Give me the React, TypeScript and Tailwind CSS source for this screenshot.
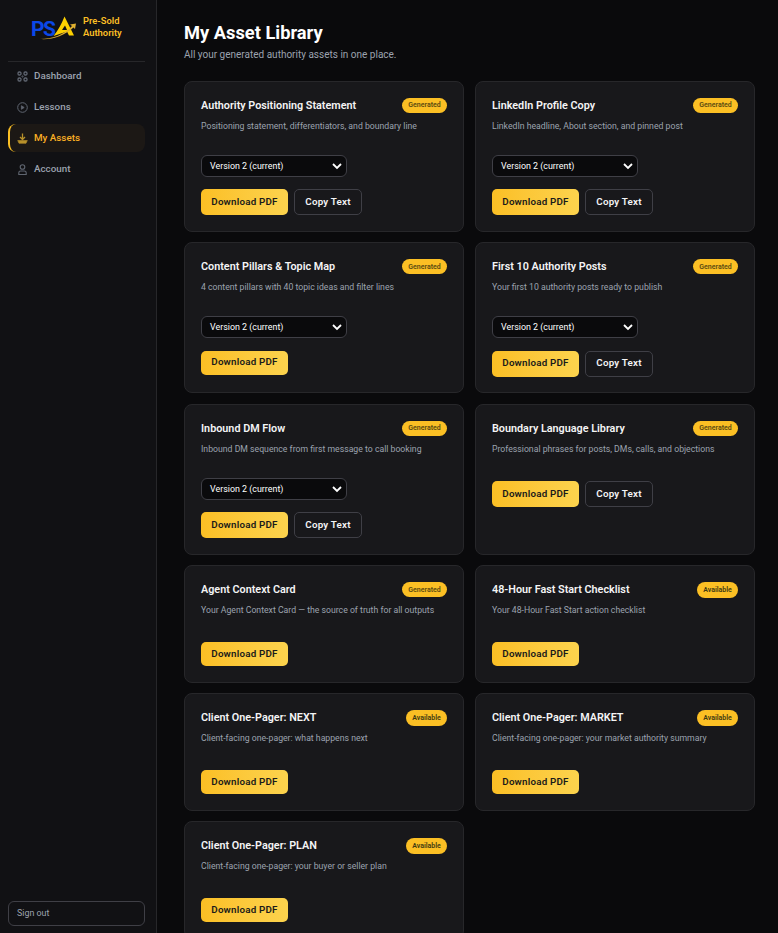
import React from "react";

type Asset = { title: string; desc: string; badge: string; select?: boolean; copy?: boolean; h: string };

const assets: Asset[] = [
  { title: "Authority Positioning Statement", desc: "Positioning statement, differentiators, and boundary line", badge: "Generated", select: true, copy: true, h: "h-[151px]" },
  { title: "LinkedIn Profile Copy", desc: "LinkedIn headline, About section, and pinned post", badge: "Generated", select: true, copy: true, h: "h-[151px]" },
  { title: "Content Pillars & Topic Map", desc: "4 content pillars with 40 topic ideas and filter lines", badge: "Generated", select: true, h: "h-[151px]" },
  { title: "First 10 Authority Posts", desc: "Your first 10 authority posts ready to publish", badge: "Generated", select: true, copy: true, h: "h-[151px]" },
  { title: "Inbound DM Flow", desc: "Inbound DM sequence from first message to call booking", badge: "Generated", select: true, copy: true, h: "h-[151px]" },
  { title: "Boundary Language Library", desc: "Professional phrases for posts, DMs, calls, and objections", badge: "Generated", copy: true, h: "h-[151px]" },
  { title: "Agent Context Card", desc: "Your Agent Context Card — the source of truth for all outputs", badge: "Generated", h: "h-[117.6px]" },
  { title: "48-Hour Fast Start Checklist", desc: "Your 48-Hour Fast Start action checklist", badge: "Available", h: "h-[117.6px]" },
  { title: "Client One-Pager: NEXT", desc: "Client-facing one-pager: what happens next", badge: "Available", h: "h-[117.6px]" },
  { title: "Client One-Pager: MARKET", desc: "Client-facing one-pager: your market authority summary", badge: "Available", h: "h-[117.6px]" },
  { title: "Client One-Pager: PLAN", desc: "Client-facing one-pager: your buyer or seller plan", badge: "Available", h: "h-[117.6px]" },
];

function DashIcon() {
  return (
    <svg width="11" height="11" viewBox="0 0 11 11" fill="none" stroke="currentColor" strokeWidth="1.3">
      <rect x="1" y="1" width="3" height="3" rx="1.2" />
      <rect x="7" y="1" width="3" height="3" rx="1.2" />
      <rect x="1" y="7" width="3" height="3" rx="1.2" />
      <rect x="7" y="7" width="3" height="3" rx="1.2" />
      <path d="M4 5.5H7M5.5 4V7" strokeWidth="0.5" />
    </svg>
  );
}

function PlayIcon() {
  return (
    <svg width="11" height="11" viewBox="0 0 11 11" fill="none" stroke="currentColor" strokeWidth="1">
      <circle cx="5.5" cy="5.5" r="4.8" />
      <path d="M4.4 3.7 7.2 5.5 4.4 7.3Z" fill="currentColor" strokeWidth="0.8" strokeLinejoin="round" />
    </svg>
  );
}

function TrayIcon() {
  return (
    <svg width="11" height="11" viewBox="0 0 11 11" fill="none" stroke="currentColor">
      <path d="M5.5 0.5V6M3 4 5.5 6.5 8 4" strokeWidth="1.3" />
      <path d="M0.7 7.5H10.3L9 10.3H2Z" fill="currentColor" strokeWidth="0.6" strokeLinejoin="round" />
    </svg>
  );
}

function UserIcon() {
  return (
    <svg width="11" height="11" viewBox="0 0 11 11" fill="none" stroke="currentColor" strokeWidth="1.1">
      <circle cx="5.5" cy="3" r="2.3" />
      <path d="M1.8 10.5V8.8C1.8 7.7 2.7 7 3.7 7H7.3C8.3 7 9.2 7.7 9.2 8.8V10.5Z" />
    </svg>
  );
}

function Logo() {
  return (
    <div className="relative h-[26px] w-[44px] shrink-0">
      <span className="absolute left-0 top-[2px] text-[21px] leading-[24px] font-bold tracking-[-1.5px] text-[#0b48e8]">PS</span>
      <svg className="absolute left-[7px] top-0" width="38" height="26" viewBox="0 0 38 26">
        <path d="M26.5 1.5 36 20.5H31L29 16.5 15.5 21 Q22 13 26.5 1.5Z" fill="#fdd000" />
        <path d="M27 10.5 29 15H24Z" fill="#101014" />
        <path d="M2 24C14 24 26 20 34 11L32 9.5 38 8.5 37 14 35.5 12.5C26 21 14 25 2 24Z" fill="#e0b030" />
      </svg>
    </div>
  );
}

function NavItem({ icon, label, active }: { icon: React.ReactNode; label: string; active?: boolean }) {
  return (
    <div
      className={
        active
          ? "flex h-[28px] items-center gap-[6px] rounded-[8px] border-l-2 border-[#fbbf24] bg-[#1c1815] pl-[7px] text-[#fbb024]"
          : "flex h-[28px] items-center gap-[6px] rounded-[8px] pl-[9px] text-[#9ca3af]"
      }
    >
      <span className={active ? "flex w-[11px] justify-center text-[#b8912a]" : "flex w-[11px] justify-center text-[#5f6570]"}>{icon}</span>
      <span className="pt-[1px] text-[9.8px] font-medium">{label}</span>
    </div>
  );
}

function Card({ a }: { a: Asset }) {
  const available = a.badge === "Available";
  return (
    <div className={`${a.h} flex flex-col rounded-[8px] border border-[#27272a] bg-[#18181b] px-[16px] pt-[16px]`}>
      <div className="flex items-center justify-between">
        <h3 className="text-[10.8px] leading-[16px] font-semibold text-[#f4f4f5]">{a.title}</h3>
        <span
          className={
            available
              ? "-mt-[1px] flex h-[16px] w-[41px] items-center justify-center rounded-full bg-[#fbbf24] text-[7px] font-semibold text-[#3f3a12]"
              : "-mt-[1px] flex h-[15px] w-[45px] items-center justify-center rounded-full bg-[#fbbf24] text-[7px] font-semibold text-[#5a4a10]"
          }
        >
          {a.badge}
        </span>
      </div>
      <p className="mt-[6px] h-[13px] text-[8.7px] leading-[13px] whitespace-nowrap text-[#9ca3af]">{a.desc}</p>
      {a.select && (
        <div className="relative mt-[22px] flex h-[22px] w-[146px] items-center rounded-[6px] border border-[#3f3f46] bg-[#0a0a0c] pl-[8px] pt-[1px] text-[8.9px] text-white">
          Version 2 (current)
          <svg className="absolute right-[4px] top-[6px]" width="10" height="8" viewBox="0 0 10 8" fill="none" stroke="white" strokeWidth="1.8">
            <path d="M1 2 5 6 9 2" />
          </svg>
        </div>
      )}
      <div className={a.select ? "mt-[12.4px] flex gap-[6px]" : "mt-[25px] flex gap-[6px]"}>
        <div
          className={
            a.copy
              ? "flex h-[26px] w-[87px] items-center justify-center rounded-[5px] bg-gradient-to-r from-[#fbbf24] to-[#fcd34d] text-[9.8px] font-semibold tracking-[0.2px] text-[#1a1a1a]"
              : "flex h-[24px] w-[87px] items-center justify-center rounded-[5px] bg-gradient-to-r from-[#fbbf24] to-[#fcd34d] text-[9.8px] font-semibold tracking-[0.2px] text-[#1a1a1a]"
          }
        >
          Download PDF
        </div>
        {a.copy && (
          <div className="flex h-[26px] w-[68px] items-center justify-center rounded-[5px] border border-[#3f3f46] bg-[#18181b] text-[9.8px] font-semibold tracking-[0.2px] text-[#f4f4f5]">
            Copy Text
          </div>
        )}
      </div>
    </div>
  );
}

export default function App() {
  return (
    <div className="flex h-[933px] w-[778px] overflow-hidden bg-[#0a0a0c] font-['Roboto',sans-serif]">
      <aside className="flex w-[157px] shrink-0 flex-col border-r border-[#27272a] bg-[#111114] pl-[8px] pr-[11px]">
        <div className="flex h-[62px] items-start gap-[8px] border-b border-[#27272a] pl-[23px] pt-[15px]">
          <Logo />
          <div className="text-[9.4px] leading-[12px] font-semibold text-[#fbbf24]">
            Pre-Sold
            <br />
            Authority
          </div>
        </div>
        <nav className="flex flex-col gap-[3px]">
          <NavItem icon={<DashIcon />} label="Dashboard" />
          <NavItem icon={<PlayIcon />} label="Lessons" />
          <NavItem icon={<TrayIcon />} label="My Assets" active />
          <NavItem icon={<UserIcon />} label="Account" />
        </nav>
        <div className="mt-auto mb-[7px] flex h-[25px] items-center rounded-[6px] border border-[#3f3f46] pl-[8px] text-[8.9px] text-[#9ca3af]">
          Sign out
        </div>
      </aside>
      <main className="flex-1 pl-[27px] pr-[23px] pt-[21px]">
        <h1 className="text-[18.3px] leading-[24px] font-bold text-white">My Asset Library</h1>
        <p className="mt-[3px] text-[10px] leading-[14px] text-[#9ca3af]">All your generated authority assets in one place.</p>
        <div className="mt-[19px] grid grid-cols-2 gap-x-[11px] gap-y-[10.45px]">
          {assets.map((a) => (
            <Card key={a.title} a={a} />
          ))}
        </div>
      </main>
    </div>
  );
}
